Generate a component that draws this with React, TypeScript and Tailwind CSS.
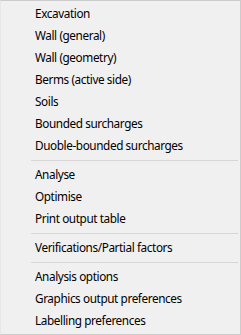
import React from "react";

type Entry = string | null;

const entries: Entry[] = [
  "Excavation",
  "Wall (general)",
  "Wall (geometry)",
  "Berms (active side)",
  "Soils",
  "Bounded surcharges",
  "Duoble-bounded surcharges",
  null,
  "Analyse",
  "Optimise",
  "Print output table",
  null,
  "Verifications/Partial factors",
  null,
  "Analysis options",
  "Graphics output preferences",
  "Labelling preferences",
];

export default function App() {
  return (
    <div className="h-[335px] w-[241px] border-t border-r border-b border-[#cccccc] border-l border-l-[#e6e6e6] bg-[#f0f0f0] py-[2px] font-['Segoe_UI','Noto_Sans',sans-serif] text-[11.75px] tracking-[-0.4px] text-black">
      {entries.map((label, i) =>
        label === null ? (
          <div key={i} className="flex h-[7px] items-center pl-[30px] pr-[2px]">
            <div className="h-px w-full bg-[#d7d7d7]" />
          </div>
        ) : (
          <div key={i} className="flex h-[22px] items-center pb-px pl-[34px] leading-none">
            {label}
          </div>
        )
      )}
    </div>
  );
}
